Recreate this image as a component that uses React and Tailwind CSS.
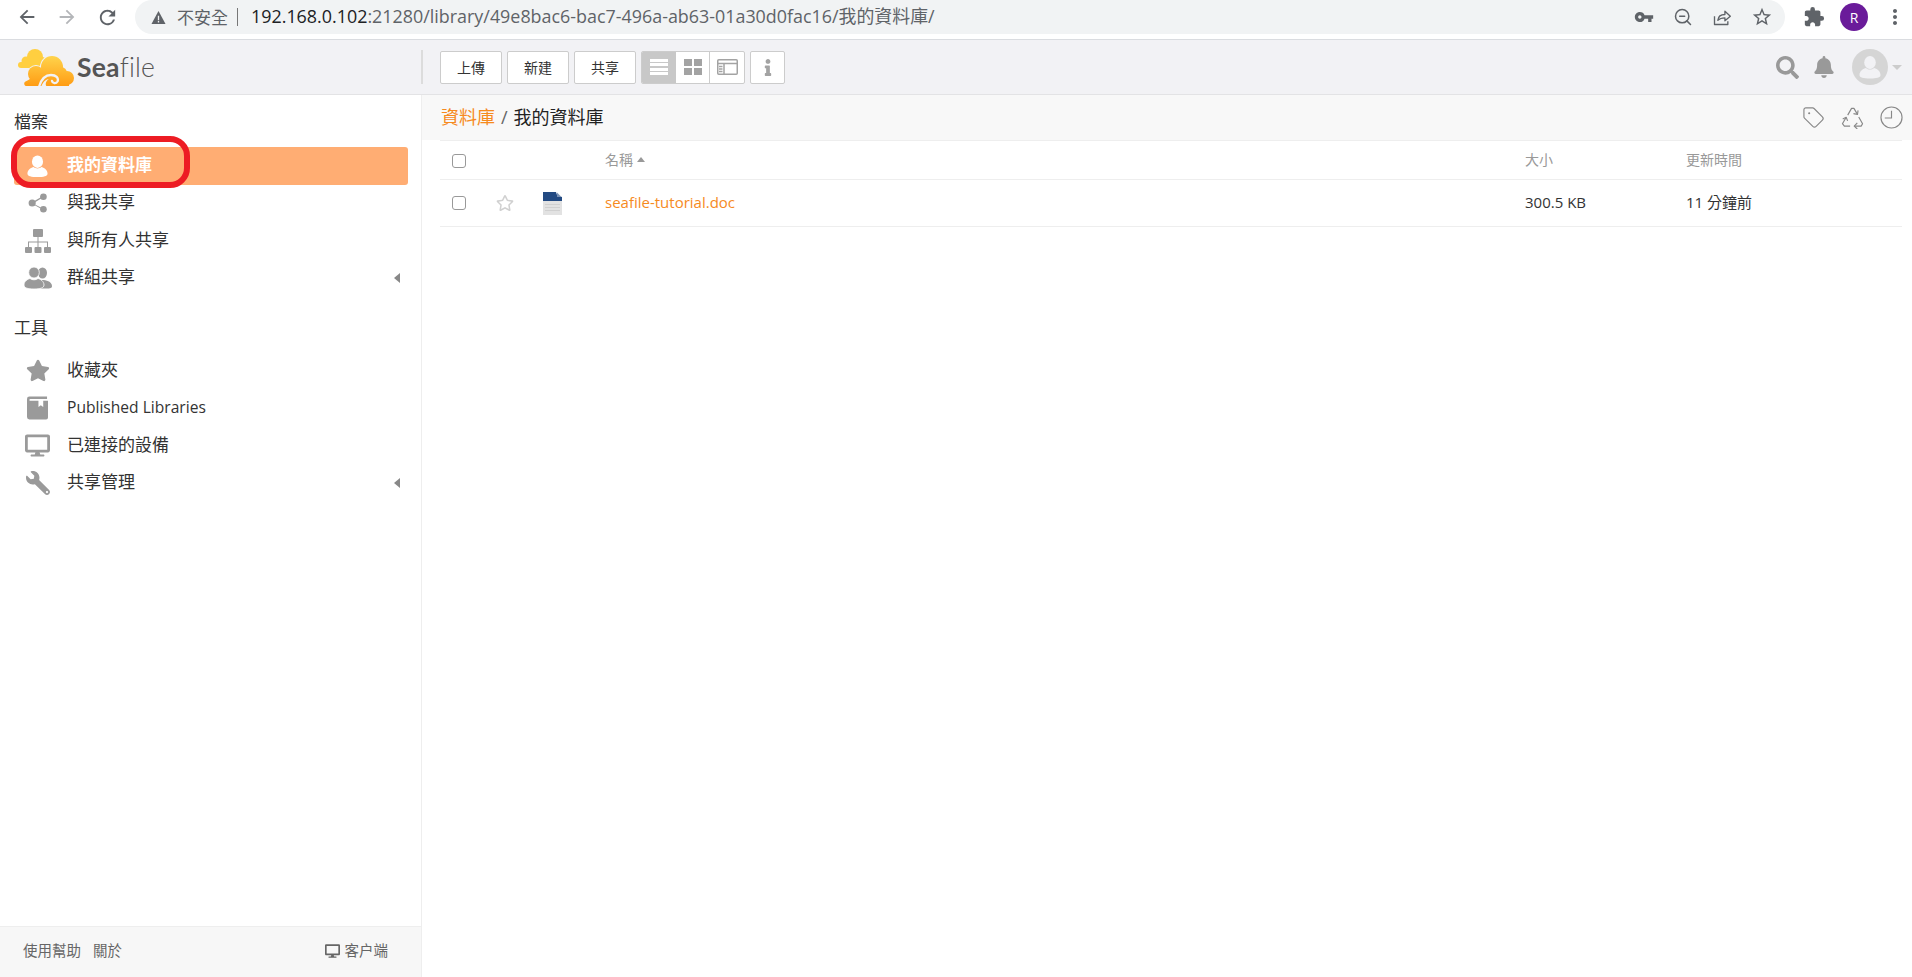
import React from "react";
import { MdArrowBack, MdArrowForward, MdRefresh, MdVpnKey, MdExtension, MdMoreVert, MdStarBorder } from "react-icons/md";
import { FaStar, FaDesktop, FaWrench, FaSearch, FaBell, FaRegStar, FaInfo } from "react-icons/fa";
import { ZoomOut, Tag } from "lucide-react";

const UserIcon = ({ className }) => (
  <svg viewBox="0 0 24 24" className={className} fill="currentColor">
    <ellipse cx="12" cy="7.5" rx="5.8" ry="6.5" />
    <path d="M1.5 20c0-4.2 4-6.4 6.5-7 1.2 1 2.500 1.500 4 1.500s2.800-.5 4-1.500c2.500.6 6.500 2.800 6.500 7 0 2.600-4 3.500-10.500 3.500S1.500 22.600 1.500 20z" />
  </svg>
);
const ShareIcon = ({ className }) => (
  <svg viewBox="0 0 24 24" className={className} fill="currentColor">
    <circle cx="5" cy="12" r="4.300" />
    <circle cx="18.500" cy="4.500" r="4" />
    <circle cx="18.500" cy="19.500" r="4" />
    <path d="M5 11l13-7.500.8 1.400L6 12.500l13 6.700-.8 1.300L5 13z" />
  </svg>
);
const SitemapIcon = ({ className }) => (
  <svg viewBox="0 0 26 24" className={className} fill="currentColor">
    <rect x="8" y="0" width="10" height="8" rx="1" />
    <rect x="0" y="18" width="7" height="6" rx="1" />
    <rect x="9.500" y="18" width="7" height="6" rx="1" />
    <rect x="19" y="18" width="7" height="6" rx="1" />
    <path d="M12.500 8h1v4.500h9.500V18h-1v-4.500h-8.500V18h-1v-4.500H4V18H3v-5.500h9.500z" />
  </svg>
);
const UsersIcon = ({ className }) => (
  <svg viewBox="0 0 28 22" className={className} fill="currentColor">
    <ellipse cx="18.500" cy="6" rx="4.500" ry="5.500" />
    <path d="M14 20c0-4 1.500-7 4.500-7s9.500 1.500 9.500 6c0 2-1.500 2.500-6 2.500S14 21.500 14 20z" />
    <ellipse cx="10" cy="5.500" rx="5.300" ry="5.500" stroke="#fff" strokeWidth="0.800" />
    <path d="M0 18c0-3.500 3.500-6 6-6.500 1 .9 2.500 1.300 4 1.300s3-.4 4-1.300c2.500.5 6 3 6 6.500 0 3-4 4-10 4s-10-1-10-4z" stroke="#fff" strokeWidth="0.800" />
  </svg>
);
const BookIcon = ({ className }) => (
  <svg viewBox="0 0 22 24" className={className} fill="currentColor">
    <path d="M2.500 0H21v2.500H3.500c-.6 0-1 .4-1 1s.4 1 1 1H12V11l2.500-2 2.500 2V4.500h5V22a2 2 0 0 1-2 2H2.500A2.500 2.500 0 0 1 0 21.500v-19A2.500 2.500 0 0 1 2.500 0z" />
  </svg>
);
const Caret = ({ className }) => (
  <svg viewBox="0 0 6 10" className={className} fill="currentColor"><path d="M6 0v10L0 5z" /></svg>
);
const RecycleIcon = ({ className }) => (
  <svg viewBox="0 0 24 24" className={className} fill="none" stroke="currentColor" strokeWidth="1.200" strokeLinejoin="round">
    <path d="M7 9.500l4-7h2.500l3.500 6" />
    <path d="M17.800 4.500l-.6 4.300-4.200-.8" />
    <path d="M18.500 11.500l4 7-1.500 2.500h-7" />
    <path d="M17 17.500l-3.200 3.500 3.200 3" />
    <path d="M9.500 21H3.500L1.500 18.500l3.800-6.500" />
    <path d="M1.800 13.500l3.600-1.700 1.500 3.700" />
  </svg>
);
const ChromeShare = ({ className }) => (
  <svg viewBox="0 0 24 24" className={className} fill="none" stroke="currentColor" strokeWidth="1.600" strokeLinejoin="round">
    <path d="M3 11v10h16v-4" />
    <path d="M7 16c.5-4.500 4-7 8.500-7V5l6.500 6-6.500 5.500V13c-3.500 0-6.500 1-8.500 3z" />
  </svg>
);
const Logo = () => (
  <svg viewBox="0 0 56 37" className="w-[56px] h-[37px] shrink-0">
    <defs>
      <linearGradient id="lg" gradientUnits="userSpaceOnUse" x1="0" y1="8" x2="0" y2="37">
        <stop offset="0" stopColor="#ffd24a" />
        <stop offset="1" stopColor="#ff9c14" />
      </linearGradient>
    </defs>
    <g fill="#ffcf40">
      <circle cx="17" cy="8" r="8" />
      <circle cx="8" cy="12" r="4.500" />
      <circle cx="24" cy="13" r="5" />
      <rect x="0" y="13" width="22" height="6" rx="3" />
    </g>
    <g fill="none" stroke="#f2f2f5" strokeWidth="2">
      <circle cx="34" cy="18" r="11" />
      <circle cx="18" cy="25" r="8" />
    </g>
    <g fill="url(#lg)">
      <circle cx="34" cy="18" r="11" />
      <circle cx="18" cy="25" r="8" />
      <circle cx="43" cy="24" r="6" />
      <circle cx="49" cy="29" r="7" />
      <rect x="13" y="22" width="30" height="15" />
      <path d="M8 37c-2-.5-2.500-3.500-.5-4.500 2-1 4-2 5.500-3.500l4 8z" />
      <rect x="43" y="30" width="8" height="7" />
    </g>
    <path fill="none" stroke="#f2f2f5" strokeWidth="2.300" strokeLinecap="round" d="M21 38C23 31 27 26 33 26c5 0 8 3 6.500 6.500-1.500 2.500-5 2-5.500-.5" />
    <path fill="#f2f2f5" d="M23 38c1.500-4 4-7.500 8-8-2 1-4 4-3 6.500.3.600 1 1 1.500 1.500z" />
  </svg>
);
const FileIcon = () => (
  <svg viewBox="0 0 19 23" className="w-[19px] h-[23px]">
    <path fill="#e2e2e2" d="M0 9h19v14H0z" />
    <path fill="#d0d0d0" d="M2 12h15v1H2zM2 15h15v1H2zM2 18h15v1H2z" />
    <path fill="#234a82" d="M0 0h13l1 3 2 1 3 1v4H0z" />
    <path fill="#fff" d="M14 0l5 5h-5z" />
    <path fill="#234a82" d="M14 .5L18.500 5H14z" opacity=".6" />
  </svg>
);

const NavItem = ({ icon, label, active, caret, latin }) => (
  <li className={`flex items-center h-[37.5px] rounded-[3px] ${active ? "bg-[#ffad73] text-white font-bold" : "text-[#333]"}`}>
    <span className={`w-[53px] flex justify-center pr-[6px] ${active ? "text-white" : "text-[#9a9a9a]"}`}>{icon}</span>
    <span className={`flex-1 leading-none ${latin ? "text-[15.6px]" : "text-[17px] pb-[3px]"}`}>{label}</span>
    {caret && <Caret className="w-[6px] h-[10px] mr-[8px] text-[#888]" />}
  </li>
);

const ToolBtn = ({ children }) => (
  <button className="w-[62px] h-[33px] bg-white border border-[#ccc] rounded-[2px] text-[14px] text-[#333] flex items-center justify-center">{children}</button>
);

export default function App() {
  return (
    <div className="w-[1912px] h-[977px] overflow-hidden flex flex-col bg-white font-['Open_Sans','Noto_Sans_CJK_TC',sans-serif]">
      {/* browser chrome */}
      <div className="h-[40px] shrink-0 flex items-start bg-white border-b border-[#dadce0]">
        <div className="flex items-center h-[34px] pl-[16px] gap-[18px] w-[135px] text-[#5f6368]">
          <MdArrowBack className="w-[22px] h-[22px]" />
          <MdArrowForward className="w-[22px] h-[22px] text-[#b4b6b9]" />
          <MdRefresh className="w-[23px] h-[23px]" />
        </div>
        <div className="w-[1650px] h-[34px] rounded-[17px] bg-[#f1f3f4] flex items-center pl-[16px] pr-[12px]">
          <svg viewBox="0 0 16 16" className="w-[15px] h-[15px] text-[#5f6368] mr-[11px]" fill="currentColor"><path d="M8 1l7.500 14H.5z" /><path fill="#f1f3f4" d="M7.300 6h1.400v5H7.300zM7.300 11.800h1.400v1.400H7.300z" /></svg>
          <span className="text-[17px] text-[#5f6368] leading-none">不安全</span>
          <span className="w-px h-[18px] bg-[#777] ml-[9px] mr-[13px]" />
          <span className="text-[17.9px] leading-none whitespace-nowrap">
            <span className="text-[#202124]">192.168.0.102</span>
            <span className="text-[#5f6368]">:21280/library/49e8bac6-bac7-496a-ab63-01a30d0fac16/我的資料庫/</span>
          </span>
          <span className="flex-1" />
          <div className="flex items-center gap-[19px] text-[#5f6368]">
            <MdVpnKey className="w-[20px] h-[20px]" />
            <ZoomOut className="w-[20px] h-[20px]" strokeWidth={1.8} />
            <ChromeShare className="w-[20px] h-[20px]" />
            <MdStarBorder className="w-[22px] h-[22px]" />
          </div>
        </div>
        <div className="flex items-center h-[34px] pl-[18px] text-[#5f6368]">
          <MdExtension className="w-[22px] h-[22px]" />
          <span className="ml-[15px] w-[28px] h-[28px] rounded-full bg-[#6a1b9a] text-white text-[14px] flex items-center justify-center">R</span>
          <MdMoreVert className="ml-[15px] w-[24px] h-[24px]" />
        </div>
      </div>

      {/* seafile top bar */}
      <header className="h-[55px] shrink-0 flex items-center bg-[#f2f2f5] border-b border-[#e3e3e5]">
        <div className="w-[422px] shrink-0 flex items-center pl-[18px]">
          <Logo />
          <span className="ml-[3px] text-[26.5px] leading-none text-[#555] tracking-[0.2px] font-['Lato',sans-serif]"><b className="font-bold">Sea</b><span className="font-light">file</span></span>
          <span className="flex-1" />
          <span className="w-[2px] h-[34px] bg-[#dcdcdc] mr-[-1px]" />
        </div>
        <div className="flex items-center pl-[18px] gap-[5px]">
          <ToolBtn>上傳</ToolBtn>
          <ToolBtn>新建</ToolBtn>
          <ToolBtn>共享</ToolBtn>
          <div className="flex h-[33px] w-[104px] bg-white border border-[#ccc] rounded-[2px] overflow-hidden">
            <span className="w-[34px] bg-[#c8c8c8] flex flex-col items-center justify-center gap-[1.500px]">
              <span className="w-[18px] h-[3px] bg-white" /><span className="w-[18px] h-[3px] bg-white" /><span className="w-[18px] h-[3px] bg-white" /><span className="w-[18px] h-[3px] bg-white" />
            </span>
            <span className="w-[34px] flex items-center justify-center border-r border-[#ccc]">
              <svg viewBox="0 0 18 16" className="w-[18px] h-[16px]" fill="#a3a3a3"><path d="M0 0h8v7H0zM10 0h8v7h-8zM0 9h8v7H0zM10 9h8v7h-8z" /></svg>
            </span>
            <span className="flex-1 flex items-center justify-center">
              <svg viewBox="0 0 21 16" className="w-[21px] h-[16px]" fill="none" stroke="#a3a3a3" strokeWidth="1.500"><rect x=".75" y=".75" width="19.500" height="14.500" rx="1" /><path d="M.75 4.500h19.500M7 4.500v10.500M2 7.500h3.500M2 10h3.500M2 12.500h3.500" /></svg>
            </span>
          </div>
          <button className="w-[35px] h-[33px] bg-white border border-[#ccc] rounded-[2px] flex items-center justify-center"><FaInfo className="w-[14px] h-[17px] text-[#a3a3a3]" /></button>
        </div>
        <span className="flex-1" />
        <div className="flex items-center text-[#999] pr-[10px]">
          <FaSearch className="w-[23px] h-[23px]" />
          <FaBell className="ml-[15px] w-[20px] h-[22px]" />
          <span className="ml-[18px] w-[36px] h-[36px] rounded-full bg-[#d5d5d5] flex items-center justify-center overflow-hidden">
            <UserIcon className="w-[24px] h-[26px] text-[#f2f2f5]" />
          </span>
          <span className="ml-[4px] w-0 h-0 border-x-[5px] border-x-transparent border-t-[5px] border-t-[#ccc]" />
        </div>
      </header>

      <div className="flex-1 flex min-h-0">
        {/* sidebar */}
        <aside className="w-[422px] shrink-0 flex flex-col border-r border-[#eee]">
          <div className="flex-1 pl-[14px] pr-[13px] pt-[17px] relative">
            <h3 className="text-[17px] leading-[20px] text-[#333] mb-[15px] font-normal">檔案</h3>
            <ul>
              <NavItem active icon={<UserIcon className="w-[23px] h-[24px]" />} label="我的資料庫" />
              <NavItem icon={<ShareIcon className="w-[20px] h-[20px]" />} label="與我共享" />
              <NavItem icon={<SitemapIcon className="w-[26px] h-[24px]" />} label="與所有人共享" />
              <NavItem caret icon={<UsersIcon className="w-[28px] h-[22px]" />} label="群組共享" />
            </ul>
            <h3 className="text-[17px] leading-[20px] text-[#333] mt-[21px] mb-[14px] font-normal">工具</h3>
            <ul>
              <NavItem icon={<FaStar className="w-[24px] h-[23px]" />} label="收藏夾" />
              <NavItem latin icon={<BookIcon className="w-[21px] h-[24px]" />} label="Published Libraries" />
              <NavItem icon={<FaDesktop className="w-[25px] h-[23px]" />} label="已連接的設備" />
              <NavItem caret icon={<FaWrench className="w-[24px] h-[24px] -scale-x-100" />} label="共享管理" />
            </ul>
            <span className="absolute left-[11px] top-[41px] w-[179px] h-[52px] border-[6px] border-[#ed1c24] rounded-[20px]" />
          </div>
          <footer className="h-[51px] shrink-0 bg-[#f7f7f7] border-t border-[#eee] flex items-center pl-[23px] pr-[33px] pb-[2px] text-[14.500px] text-[#666]">
            <span>使用幫助</span>
            <span className="ml-[12px]">關於</span>
            <span className="flex-1" />
            <FaDesktop className="w-[15px] h-[14px] mr-[5px]" />
            <span>客户端</span>
          </footer>
        </aside>

        {/* main */}
        <main className="flex-1 min-w-0 flex flex-col">
          <div className="h-[45px] shrink-0 bg-[#f8f8f8] flex items-center pl-[19px] pr-[9px]">
            <span className="text-[18px] text-[#f68a1e]">資料庫</span>
            <span className="text-[18px] text-[#666] mx-[6px]">/</span>
            <span className="text-[18px] text-[#222]">我的資料庫</span>
            <span className="flex-1" />
            <div className="flex items-center gap-[16px] text-[#888]">
              <Tag className="w-[23px] h-[23px]" strokeWidth={1.200} />
              <RecycleIcon className="w-[23px] h-[23px]" />
              <svg viewBox="0 0 24 24" className="w-[23px] h-[23px]" fill="none" stroke="currentColor" strokeWidth="1.200"><circle cx="12" cy="12" r="11" /><path d="M12 5v7.500H5" /></svg>
            </div>
          </div>
          <div className="pl-[18px] pr-[10px]">
            <div className="h-[40px] flex items-center border-y border-[#eee] text-[14px] text-[#999]">
              <span className="w-[165px] pl-[12px] pt-[1px]"><span className="block w-[14px] h-[14px] bg-white border-[1.500px] border-[#999] rounded-[3px]" /></span>
              <span className="w-[920px] flex items-center pb-[2px]">名稱<span className="ml-[4px] w-0 h-0 border-x-[4.500px] border-x-transparent border-b-[5px] border-b-[#999]" /></span>
              <span className="w-[161px] pb-[2px]">大小</span>
              <span className="pb-[2px]">更新時間</span>
            </div>
            <div className="h-[47px] flex items-center border-b border-[#eee] text-[15px] text-[#333]">
              <span className="w-[56px] pl-[12px] shrink-0"><span className="block w-[14px] h-[14px] bg-white border-[1.500px] border-[#999] rounded-[3px]" /></span>
              <span className="w-[47px] shrink-0"><FaRegStar className="w-[18px] h-[18px] text-[#d0d0d0]" /></span>
              <span className="w-[62px] shrink-0"><FileIcon /></span>
              <span className="w-[920px] text-[#f68a1e] pb-[1px]">seafile-tutorial.doc</span>
              <span className="w-[161px] pb-[1px]">300.5 KB</span>
              <span className="pb-[1px]">11 分鐘前</span>
            </div>
          </div>
        </main>
      </div>
    </div>
  );
}
